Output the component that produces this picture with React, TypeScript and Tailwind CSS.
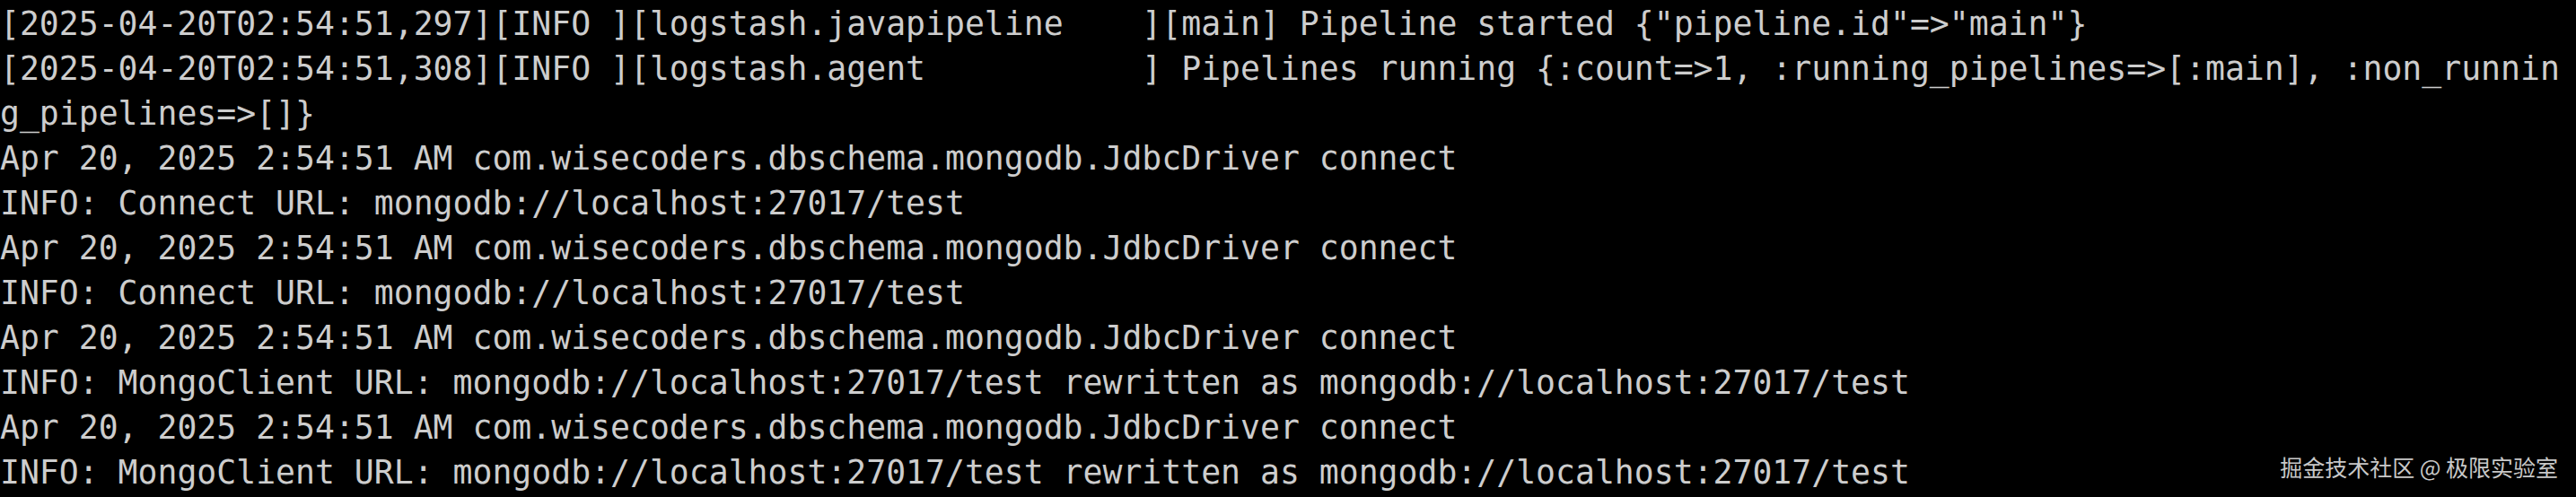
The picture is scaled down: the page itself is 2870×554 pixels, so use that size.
const lines = [
  '[2025-04-20T02:54:51,297][INFO ][logstash.javapipeline    ][main] Pipeline started {"pipeline.id"=>"main"}',
  "[2025-04-20T02:54:51,308][INFO ][logstash.agent           ] Pipelines running {:count=>1, :running_pipelines=>[:main], :non_runnin",
  "g_pipelines=>[]}",
  "Apr 20, 2025 2:54:51 AM com.wisecoders.dbschema.mongodb.JdbcDriver connect",
  "INFO: Connect URL: mongodb://localhost:27017/test",
  "Apr 20, 2025 2:54:51 AM com.wisecoders.dbschema.mongodb.JdbcDriver connect",
  "INFO: Connect URL: mongodb://localhost:27017/test",
  "Apr 20, 2025 2:54:51 AM com.wisecoders.dbschema.mongodb.JdbcDriver connect",
  "INFO: MongoClient URL: mongodb://localhost:27017/test rewritten as mongodb://localhost:27017/test",
  "Apr 20, 2025 2:54:51 AM com.wisecoders.dbschema.mongodb.JdbcDriver connect",
  "INFO: MongoClient URL: mongodb://localhost:27017/test rewritten as mongodb://localhost:27017/test",
];

export default function App() {
  return (
    <div className="relative w-[2870px] h-[554px] bg-black overflow-hidden">
      {/* terminal output */}
      <div className="flex flex-col pt-[1.5px] font-['DejaVu_Sans_Mono',monospace] text-[36.45px] leading-[50px] text-[#cdcdcd]">
        {lines.map((line, i) => (
          <div key={i} className="whitespace-pre">
            {line}
          </div>
        ))}
      </div>

      {/* watermark */}
      <div className="absolute right-[20px] bottom-[16px] font-['Noto_Sans_CJK_SC',sans-serif] text-[25px] leading-[36px] text-[#c8c8c8]">
        掘金技术社区 @ 极限实验室
      </div>
    </div>
  );
}
